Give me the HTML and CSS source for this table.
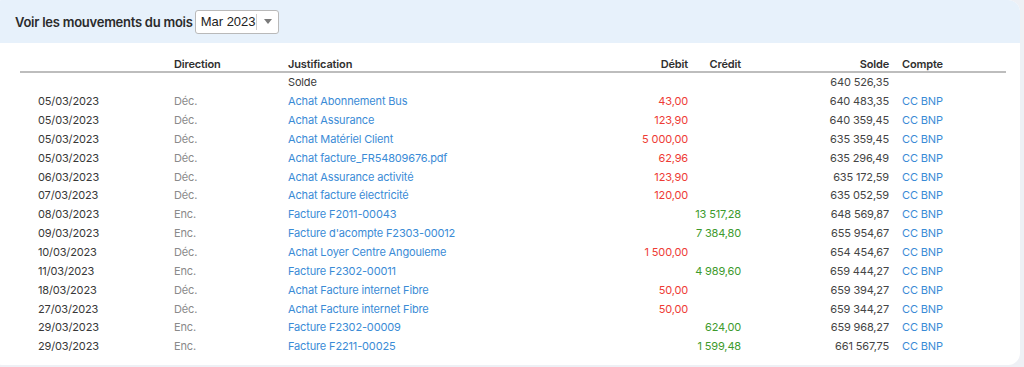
FILE: index.html
```html
<!DOCTYPE html>
<html lang="fr">
<head>
<meta charset="utf-8">
<title>Mouvements du mois</title>
<link rel="stylesheet" href="styles.css">
</head>
<body>
<div class="card">
  <div class="card-head">
    <span class="title">Voir les mouvements du mois</span>
    <div class="select">
      <span class="select-value">Mar 2023</span>
      <span class="select-sep"></span>
      <span class="select-caret"></span>
    </div>
  </div>
  <div class="card-body">
    <table class="moves">
      <colgroup>
        <col class="c-date"><col class="c-dir"><col class="c-just"><col class="c-deb"><col class="c-cred"><col class="c-solde"><col class="c-compte">
      </colgroup>
      <thead>
        <tr><th></th><th>Direction</th><th>Justification</th><th class="num">Débit</th><th class="num cred-cell">Crédit</th><th class="num">Solde</th><th class="compte">Compte</th></tr>
      </thead>
      <tbody>
        <tr><td></td><td></td><td class="plain">Solde</td><td></td><td class="cred-cell"></td><td class="num solde">640 526,35</td><td class="compte"></td></tr>
        <tr><td class="date">05/03/2023</td><td class="dir">Déc.</td><td class="link">Achat Abonnement Bus</td><td class="num deb">43,00</td><td class="cred-cell"></td><td class="num solde">640 483,35</td><td class="link compte">CC BNP</td></tr>
        <tr><td class="date">05/03/2023</td><td class="dir">Déc.</td><td class="link">Achat Assurance</td><td class="num deb">123,90</td><td class="cred-cell"></td><td class="num solde">640 359,45</td><td class="link compte">CC BNP</td></tr>
        <tr><td class="date">05/03/2023</td><td class="dir">Déc.</td><td class="link">Achat Matériel Client</td><td class="num deb">5 000,00</td><td class="cred-cell"></td><td class="num solde">635 359,45</td><td class="link compte">CC BNP</td></tr>
        <tr><td class="date">05/03/2023</td><td class="dir">Déc.</td><td class="link">Achat facture_FR54809676.pdf</td><td class="num deb">62,96</td><td class="cred-cell"></td><td class="num solde">635 296,49</td><td class="link compte">CC BNP</td></tr>
        <tr><td class="date">06/03/2023</td><td class="dir">Déc.</td><td class="link">Achat Assurance activité</td><td class="num deb">123,90</td><td class="cred-cell"></td><td class="num solde">635 172,59</td><td class="link compte">CC BNP</td></tr>
        <tr><td class="date">07/03/2023</td><td class="dir">Déc.</td><td class="link">Achat facture électricité</td><td class="num deb">120,00</td><td class="cred-cell"></td><td class="num solde">635 052,59</td><td class="link compte">CC BNP</td></tr>
        <tr><td class="date">08/03/2023</td><td class="dir">Enc.</td><td class="link">Facture F2011-00043</td><td></td><td class="num cred cred-cell">13 517,28</td><td class="num solde">648 569,87</td><td class="link compte">CC BNP</td></tr>
        <tr><td class="date">09/03/2023</td><td class="dir">Enc.</td><td class="link">Facture d'acompte F2303-00012</td><td></td><td class="num cred cred-cell">7 384,80</td><td class="num solde">655 954,67</td><td class="link compte">CC BNP</td></tr>
        <tr><td class="date">10/03/2023</td><td class="dir">Déc.</td><td class="link">Achat Loyer Centre Angouleme</td><td class="num deb">1 500,00</td><td class="cred-cell"></td><td class="num solde">654 454,67</td><td class="link compte">CC BNP</td></tr>
        <tr><td class="date">11/03/2023</td><td class="dir">Enc.</td><td class="link">Facture F2302-00011</td><td></td><td class="num cred cred-cell">4 989,60</td><td class="num solde">659 444,27</td><td class="link compte">CC BNP</td></tr>
        <tr><td class="date">18/03/2023</td><td class="dir">Déc.</td><td class="link">Achat Facture internet Fibre</td><td class="num deb">50,00</td><td class="cred-cell"></td><td class="num solde">659 394,27</td><td class="link compte">CC BNP</td></tr>
        <tr><td class="date">27/03/2023</td><td class="dir">Déc.</td><td class="link">Achat Facture internet Fibre</td><td class="num deb">50,00</td><td class="cred-cell"></td><td class="num solde">659 344,27</td><td class="link compte">CC BNP</td></tr>
        <tr><td class="date">29/03/2023</td><td class="dir">Enc.</td><td class="link">Facture F2302-00009</td><td></td><td class="num cred cred-cell">624,00</td><td class="num solde">659 968,27</td><td class="link compte">CC BNP</td></tr>
        <tr><td class="date">29/03/2023</td><td class="dir">Enc.</td><td class="link">Facture F2211-00025</td><td></td><td class="num cred cred-cell">1 599,48</td><td class="num solde">661 567,75</td><td class="link compte">CC BNP</td></tr>
      </tbody>
    </table>
  </div>
</div>
</body>
</html>
```

FILE: styles.css
```css
html, body {
  margin: 0;
  padding: 0;
  background: #eef0f5;
  font-family: Inter, "Noto Sans", sans-serif;
}

.card {
  margin-left: -10px;
  width: 1030px;
  background: #ffffff;
  border-radius: 12px;
  overflow: hidden;
}

.card-head {
  height: 43px;
  background: #e7f1fb;
  display: flex;
  align-items: center;
  padding-left: 25px;
  gap: 2px;
  box-sizing: border-box;
}

.title {
  font-size: 13px;
  font-weight: 600;
  color: #2b2b2b;
  letter-spacing: -0.25px;
}

.select {
  display: flex;
  align-items: center;
  width: 84px;
  height: 24px;
  box-sizing: border-box;
  border: 1px solid #b9b9b9;
  border-radius: 3px;
  background: #fff;
  font-family: "Liberation Sans", Arial, sans-serif;
  font-size: 13px;
  color: #222;
}

.select-value {
  padding-left: 5px;
  width: 55px;
}

.select-sep {
  width: 1px;
  height: 16px;
  background: #cfcfcf;
}

.select-caret {
  margin-left: 7px;
  width: 0;
  height: 0;
  border-left: 4px solid transparent;
  border-right: 4px solid transparent;
  border-top: 5px solid #7a7a7a;
}

.card-body {
  padding: 11px 24px 9px 30px;
}

.moves {
  table-layout: fixed;
  width: 986px;
  border-collapse: collapse;
  font-size: 11px;
  letter-spacing: -0.15px;
}

.c-date { width: 150px; }
.c-dir { width: 114px; }
.c-just { width: 296px; }
.c-deb { width: 112px; }
.c-cred { width: 53px; }
.c-solde { width: 148px; }
.c-compte { width: 113px; }

.moves th {
  height: 15px;
  padding: 2px 4px 0;
  text-align: left;
  font-weight: 600;
  color: #2f2f2f;
  border-bottom: 2px solid #bdbdbd;
  white-space: nowrap;
}

.moves td {
  height: 18.85px;
  padding: 0 4px;
  white-space: nowrap;
  color: #333;
}

.moves td:first-child {
  padding-left: 18px;
}

.moves .num { text-align: right; }
.moves .cred-cell { padding-left: 0; }
.moves .compte { padding-left: 9px; }

.moves .date { color: #383838; }
.moves .dir { color: #8a8a8a; }
.moves .link { color: #3a8bd6; }
.moves .plain { color: #3a3a3a; }
.moves .deb { color: #ee3b35; }
.moves .cred { color: #3d9a2c; }
.moves .solde { color: #454545; }
```
